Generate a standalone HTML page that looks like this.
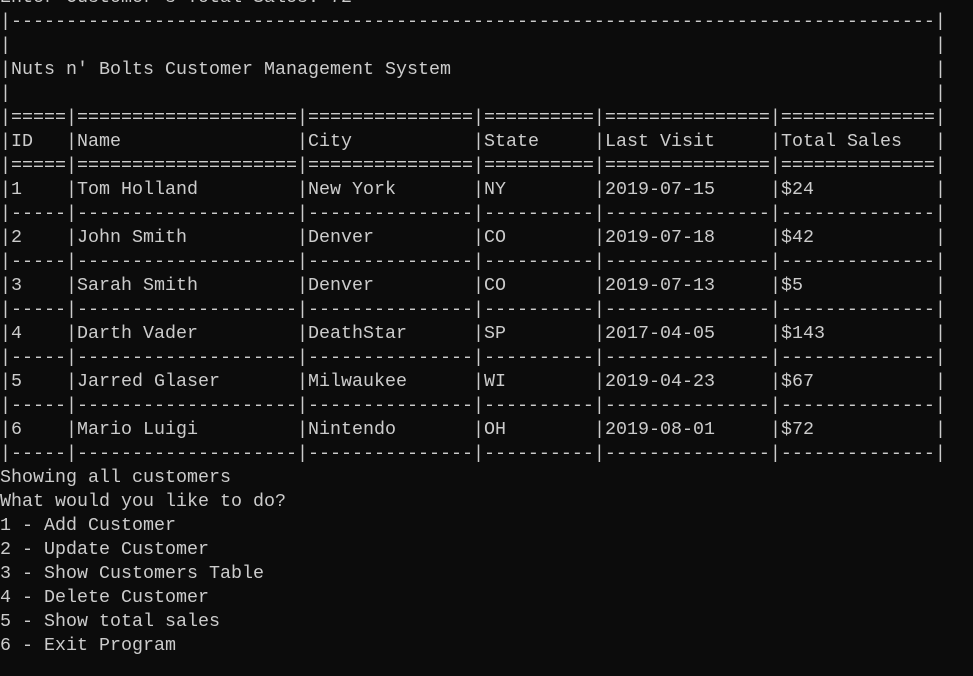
<!DOCTYPE html>
<html><head><meta charset="utf-8"><style>
html,body{margin:0;padding:0;background:#0c0c0c;width:973px;height:676px;overflow:hidden}
pre{position:absolute;left:0;top:-14px;margin:0;font-family:"Liberation Mono",monospace;font-size:18.33px;line-height:24px;color:#cccccc;white-space:pre}
i{font-style:normal;display:inline-block;overflow:hidden;vertical-align:top}
.a{width:55px}.b{width:220px}.c{width:165px}.d{width:110px}.e{width:165px}.f{width:154px}.t{width:924px}
</style></head><body><pre>Enter Customer's Total Sales: 72
|------------------------------------------------------------------------------------|
|<i class="t"> </i>|
|<i class="t">Nuts n' Bolts Customer Management System</i>|
|<i class="t"> </i>|
|=====|====================|===============|==========|===============|==============|
|<i class="a">ID</i>|<i class="b">Name</i>|<i class="c">City</i>|<i class="d">State</i>|<i class="e">Last Visit</i>|<i class="f">Total Sales</i>|
|=====|====================|===============|==========|===============|==============|
|<i class="a">1</i>|<i class="b">Tom Holland</i>|<i class="c">New York</i>|<i class="d">NY</i>|<i class="e">2019-07-15</i>|<i class="f">$24</i>|
|-----|--------------------|---------------|----------|---------------|--------------|
|<i class="a">2</i>|<i class="b">John Smith</i>|<i class="c">Denver</i>|<i class="d">CO</i>|<i class="e">2019-07-18</i>|<i class="f">$42</i>|
|-----|--------------------|---------------|----------|---------------|--------------|
|<i class="a">3</i>|<i class="b">Sarah Smith</i>|<i class="c">Denver</i>|<i class="d">CO</i>|<i class="e">2019-07-13</i>|<i class="f">$5</i>|
|-----|--------------------|---------------|----------|---------------|--------------|
|<i class="a">4</i>|<i class="b">Darth Vader</i>|<i class="c">DeathStar</i>|<i class="d">SP</i>|<i class="e">2017-04-05</i>|<i class="f">$143</i>|
|-----|--------------------|---------------|----------|---------------|--------------|
|<i class="a">5</i>|<i class="b">Jarred Glaser</i>|<i class="c">Milwaukee</i>|<i class="d">WI</i>|<i class="e">2019-04-23</i>|<i class="f">$67</i>|
|-----|--------------------|---------------|----------|---------------|--------------|
|<i class="a">6</i>|<i class="b">Mario Luigi</i>|<i class="c">Nintendo</i>|<i class="d">OH</i>|<i class="e">2019-08-01</i>|<i class="f">$72</i>|
|-----|--------------------|---------------|----------|---------------|--------------|
Showing all customers
What would you like to do?
1 - Add Customer
2 - Update Customer
3 - Show Customers Table
4 - Delete Customer
5 - Show total sales
6 - Exit Program
</pre></body></html>
